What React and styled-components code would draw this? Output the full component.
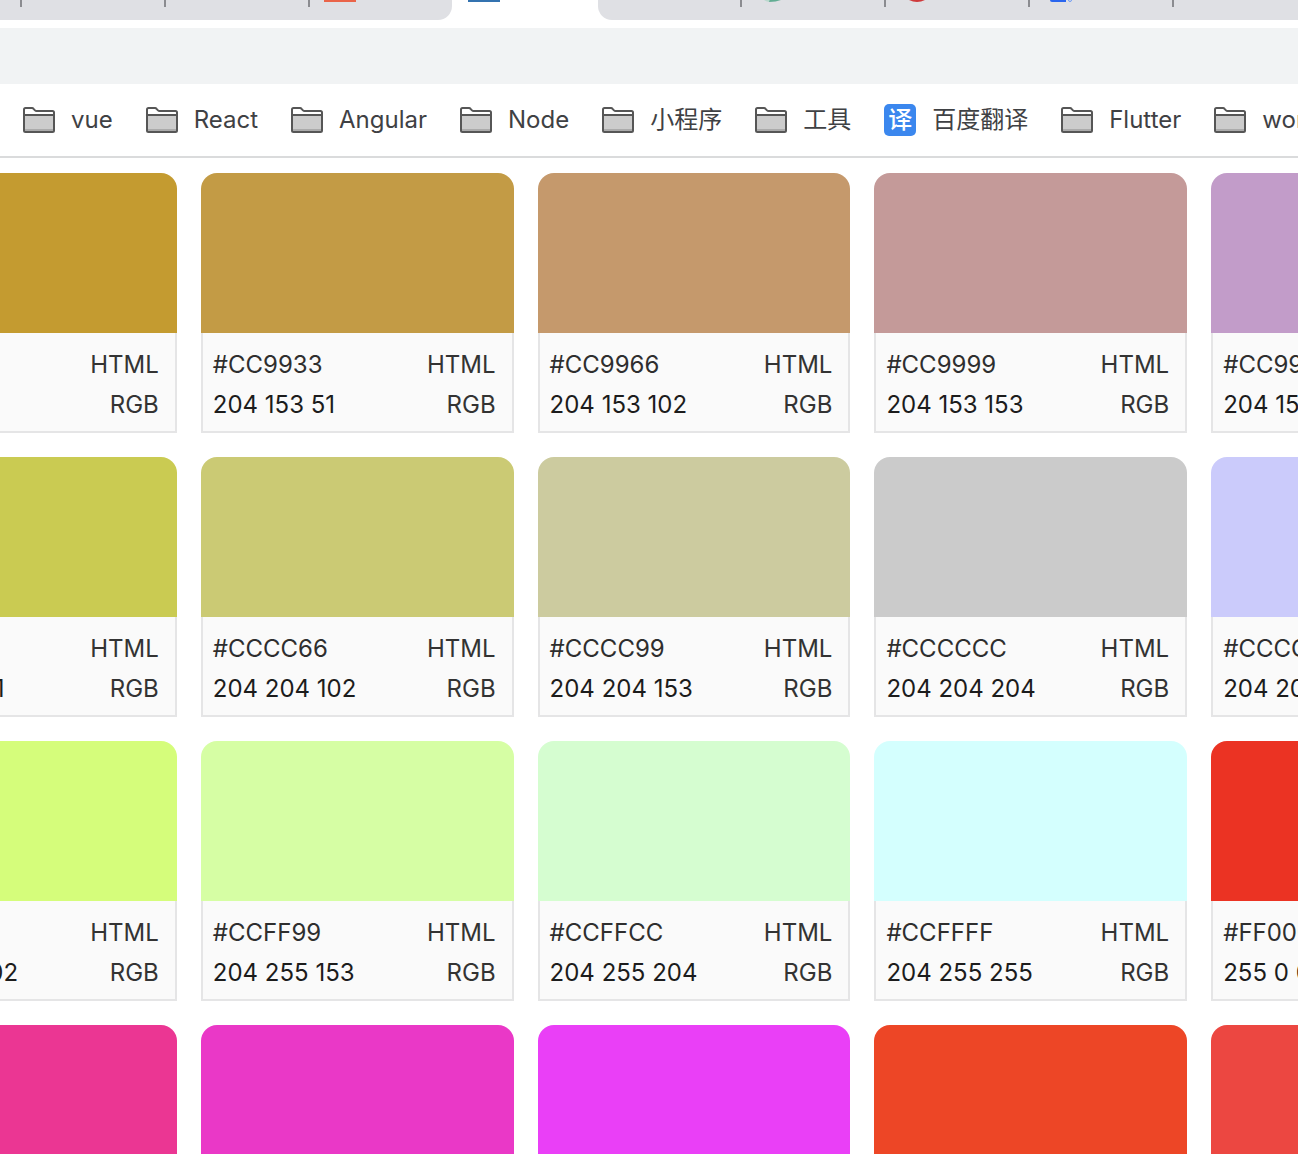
import React from "react";
import styled, { createGlobalStyle } from "styled-components";

const GlobalStyle = createGlobalStyle`
  * { box-sizing: border-box; }
  body {
    margin: 0;
    background: #fff;
    font-family: Inter, "Noto Sans CJK SC", sans-serif;
    font-size: 24px;
  }
`;

const Page = styled.div`
  display: flex;
  flex-direction: column;
  height: 100vh;
  overflow: hidden;
`;

const TabStrip = styled.nav`
  display: flex;
  flex: none;
  height: 20px;
`;

const TabGroup = styled.div`
  display: flex;
  flex: ${(p) => (p.$grow ? "1 0 0" : "none")};
  overflow: hidden;
  background: #dfe0e4;
  border-radius: ${(p) => (p.$grow ? "0 0 0 14px" : "0 0 14px 0")};
`;

const Tab = styled.button`
  display: flex;
  flex: none;
  align-items: flex-start;
  justify-content: space-between;
  width: ${(p) => p.$width || 144}px;
  height: 20px;
  padding: 0 0 0 ${(p) => (p.$active ? 16 : 14)}px;
  border: 0;
  background: ${(p) => (p.$active ? "#fff" : "transparent")};
`;

const Favicon = styled.svg`
  display: block;
  flex: none;
  width: 32px;
  height: 6px;
`;

const Separator = styled.span`
  width: 2px;
  height: 7px;
  margin-left: auto;
  background: #8b8c90;
`;

const AddressBar = styled.div`
  flex: none;
  height: 56px;
  margin-top: 8px;
  background: #f1f3f4;
`;

const Bookmarks = styled.nav`
  display: flex;
  flex: none;
  align-items: center;
  gap: 33px;
  height: 74px;
  padding-left: 23px;
  border-bottom: 2px solid #dadbdc;
  overflow: hidden;
`;

const Bookmark = styled.a`
  display: flex;
  flex: none;
  align-items: center;
  gap: 16px;
  color: #3f4144;
  line-height: 32px;
  text-decoration: none;
  white-space: nowrap;
`;

const FolderSvg = styled.svg`
  display: block;
  width: 32px;
  height: 26px;
`;

const Translate = styled.span`
  display: grid;
  place-items: center;
  width: 32px;
  height: 32px;
  border-radius: 5px;
  background: #3b87ee;
  color: #fff;
  font-weight: 500;
  line-height: 32px;
`;

const Main = styled.main`
  flex: 1 0 0;
  min-height: 0;
  overflow: hidden;
  padding-top: 15px;
`;

const Grid = styled.div`
  display: grid;
  grid-template-columns: repeat(5, 1fr);
  gap: 24px;
  margin: 0 -226px 0 -136px;
`;

const Card = styled.article`
  overflow: hidden;
  border-radius: 16px 16px 0 0;
`;

const Swatch = styled.div`
  height: 160px;
  background: ${(p) => p.$color};
`;

const Details = styled.dl`
  margin: 0;
  padding: 12px 16px 6px 10px;
  border: solid #e5e5e6;
  border-width: 0 2px 2px;
  background: #fafafa;
`;

const Row = styled.div`
  display: flex;
  flex-direction: row-reverse;
  justify-content: space-between;
  line-height: 40px;
`;

const Label = styled.dt`
  color: #333;
`;

const Value = styled.dd`
  margin: 0;
  color: ${(p) => (p.$dark ? "#1c1c1c" : "#2e2e2e")};
`;

function Folder() {
  return (
    <FolderSvg viewBox="0 0 32 26" aria-hidden="true">
      <path d="M1 8.5H31V23.5Q31 25 29.5 25H2.5Q1 25 1 23.5Z" fill="#ccc" />
      <path d="M2 22H30V24H2Z" fill="#ababab" />
      <path
        d="M1 8V2.5Q1 1 2.5 1H9Q10 1 10.6 1.8L12 3.4Q12.6 4 13.6 4H29.5Q31 4 31 5.5V23.5Q31 25 29.5 25H2.5Q1 25 1 23.5V8H31"
        fill="none"
        stroke="#565656"
        strokeWidth="2"
      />
    </FolderSvg>
  );
}

const bookmarks = ["vue", "React", "Angular", "Node", "小程序", "工具", "百度翻译", "Flutter", "work"];

const colors = [
  ["#CC9900", "204 153 0", "#c49b30"],
  ["#CC9933", "204 153 51", "#c39b45"],
  ["#CC9966", "204 153 102", "#c5996c"],
  ["#CC9999", "204 153 153", "#c49a99"],
  ["#CC99CC", "204 153 204", "#c29cc9"],
  ["#CCCC33", "204 204 51", "#cacb52"],
  ["#CCCC66", "204 204 102", "#cbca74"],
  ["#CCCC99", "204 204 153", "#cccb9f"],
  ["#CCCCCC", "204 204 204", "#cbcbcb"],
  ["#CCCCFF", "204 204 255", "#cbcbfb"],
  ["#CCFF66", "204 255 102", "#d5fd7b"],
  ["#CCFF99", "204 255 153", "#d6fea4"],
  ["#CCFFCC", "204 255 204", "#d5fdd0"],
  ["#CCFFFF", "204 255 255", "#d4fffe"],
  ["#FF0000", "255 0 0", "#eb3323"],
  ["#FF0099", "255 0 153", "#eb3693"],
  ["#FF00CC", "255 0 204", "#ea38c7"],
  ["#FF00FF", "255 0 255", "#ea3ff7"],
  ["#FF3300", "255 51 0", "#ed4626"],
  ["#FF3333", "255 51 51", "#ec4741"],
];

export default function App() {
  return (
    <Page>
      <GlobalStyle />
      <TabStrip aria-label="Tabs">
        <TabGroup>
          <Tab $width={22} aria-label="Tab 1"><Separator /></Tab>
          <Tab aria-label="Tab 2"><Separator /></Tab>
          <Tab aria-label="Tab 3"><Separator /></Tab>
          <Tab $width={142} aria-label="Tab 4">
            <Favicon viewBox="0 0 32 6"><rect width="32" height="2" fill="#ea6449" /></Favicon>
          </Tab>
        </TabGroup>
        <Tab $width={146} $active aria-label="Current tab">
          <Favicon viewBox="0 0 32 6"><rect width="32" height="2" fill="#3473b0" /></Favicon>
        </Tab>
        <TabGroup $grow>
          <Tab aria-label="Tab 6"><Separator /></Tab>
          <Tab aria-label="Tab 7">
            <Favicon viewBox="0 0 32 6">
              <path d="M8 0H13L13 2Q10 1.5 8 0Z" fill="#b9d9cd" />
              <path d="M13.5 0H25Q20 2 13 2Z" fill="#62ad93" />
            </Favicon>
            <Separator />
          </Tab>
          <Tab aria-label="Tab 8">
            <Favicon viewBox="0 0 32 6"><path d="M9 0H25Q17 4 9 0Z" fill="#cf3a3c" /></Favicon>
            <Separator />
          </Tab>
          <Tab aria-label="Tab 9">
            <Favicon viewBox="0 0 32 6">
              <path d="M6 0H22V2H8Q6 2 6 0Z" fill="#2a66ee" />
              <path d="M24.5 0Q24.5 1.5 26 1.5Q27.5 1.5 27.5 0" fill="none" stroke="#6d9af3" />
            </Favicon>
            <Separator />
          </Tab>
          <Tab aria-label="Tab 10" />
        </TabGroup>
      </TabStrip>
      <AddressBar />
      <Bookmarks aria-label="Bookmarks">
        {bookmarks.map((name) => (
          <Bookmark href="#" key={name}>
            {name === "百度翻译" ? <Translate aria-hidden="true">译</Translate> : <Folder />}
            <span>{name}</span>
          </Bookmark>
        ))}
      </Bookmarks>
      <Main>
        <Grid>
          {colors.map(([html, rgb, color]) => (
            <Card key={html}>
              <Swatch $color={color} />
              <Details>
                <Row><Label>HTML</Label><Value>{html}</Value></Row>
                <Row><Label>RGB</Label><Value $dark>{rgb}</Value></Row>
              </Details>
            </Card>
          ))}
        </Grid>
      </Main>
    </Page>
  );
}
